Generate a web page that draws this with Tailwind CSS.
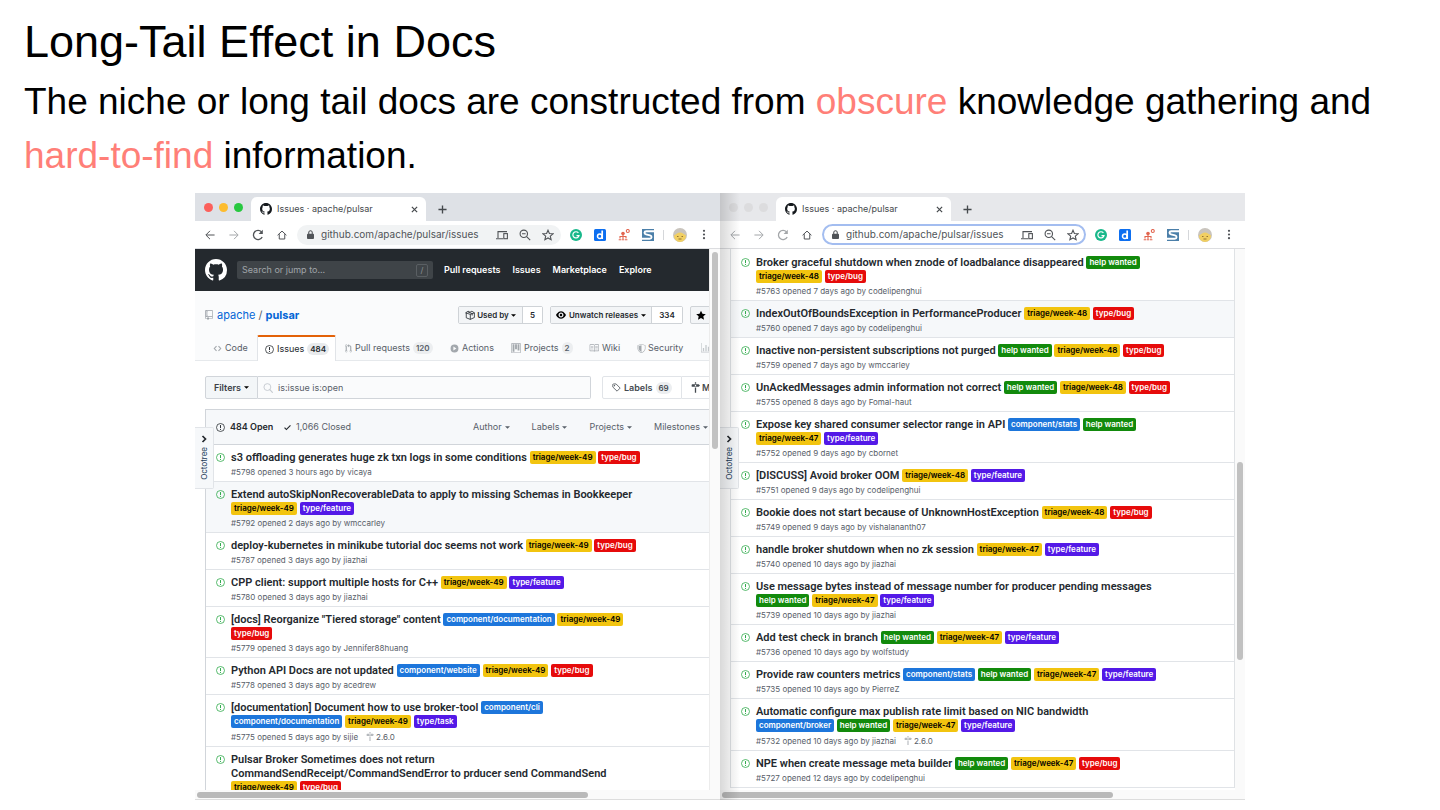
<!DOCTYPE html>
<html lang="en">
<head>
<meta charset="utf-8">
<title>Long-Tail Effect in Docs</title>
<script src="https://cdn.jsdelivr.net/npm/@tailwindcss/browser@4"></script>
</head>
<body class="bg-white text-black font-['Liberation_Sans',sans-serif]">
<svg class="hidden" xmlns="http://www.w3.org/2000/svg">
  <symbol id="mark" viewBox="0 0 16 16"><path d="M8 0C3.58 0 0 3.58 0 8c0 3.54 2.29 6.53 5.47 7.59.4.07.55-.17.55-.38 0-.19-.01-.82-.01-1.49-2.01.37-2.53-.49-2.69-.94-.09-.23-.48-.94-.82-1.13-.28-.15-.68-.52-.01-.53.63-.01 1.08.58 1.23.82.72 1.21 1.87.87 2.33.66.07-.52.28-.87.51-1.07-1.78-.2-3.64-.89-3.64-3.95 0-.87.31-1.59.82-2.15-.08-.2-.36-1.02.08-2.12 0 0 .67-.21 2.2.82.64-.18 1.32-.27 2-.27.68 0 1.36.09 2 .27 1.53-1.04 2.2-.82 2.2-.82.44 1.1.16 1.92.08 2.12.51.56.82 1.27.82 2.15 0 3.07-1.87 3.75-3.65 3.95.29.25.54.73.54 1.48 0 1.07-.01 1.93-.01 2.2 0 .21.15.46.55.38A8.013 8.013 0 0016 8c0-4.42-3.58-8-8-8z"/></symbol>
  <symbol id="issue" viewBox="0 0 14 14"><circle cx="7" cy="7" r="6.2" fill="none" stroke="currentColor" stroke-width="1.2"/><path fill="none" stroke="currentColor" stroke-width="1.5" d="M7 3.2v4.6M7 9.200v1.600"/></symbol>
  <symbol id="repo" viewBox="0 0 12 16"><path d="M4 9H3V8h1v1zm0-3H3v1h1V6zm0-2H3v1h1V4zm0-2H3v1h1V2zm8-1v12c0 .55-.45 1-1 1H6v2l-1.5-1.5L3 16v-2H1c-.55 0-1-.45-1-1V1c0-.55.45-1 1-1h10c.55 0 1 .45 1 1zm-1 10H1v2h2v-1h3v1h5v-2zm0-10H2v9h9V1z"/></symbol>
  <symbol id="code" viewBox="0 0 14 16"><path d="M9.5 3L8 4.5 11.5 8 8 11.5 9.5 13 14 8 9.5 3zm-5 0L0 8l4.5 5L6 11.5 2.5 8 6 4.5 4.5 3z"/></symbol>
  <symbol id="pr" viewBox="0 0 12 16"><path d="M11 11.28V5c-.03-.78-.34-1.47-.94-2.06C9.46 2.35 8.78 2.03 8 2H7V0L4 3l3 3V4h1c.27.02.48.11.69.31.21.2.3.42.31.69v6.28A1.993 1.993 0 0010 15a1.993 1.993 0 001-3.72zm-1 2.92c-.66 0-1.2-.55-1.2-1.2 0-.65.55-1.2 1.2-1.2.65 0 1.2.55 1.2 1.2 0 .65-.55 1.2-1.2 1.2zM4 3c0-1.11-.89-2-2-2a1.993 1.993 0 00-1 3.72v6.56A1.993 1.993 0 002 15a1.993 1.993 0 001-3.72V4.720c.59-.34 1-.98 1-1.72zm-.8 10c0 .66-.55 1.2-1.2 1.2-.65 0-1.2-.55-1.2-1.2 0-.65.55-1.2 1.2-1.2.65 0 1.2.55 1.2 1.2zM2 4.200C1.340 4.200.8 3.650.8 3c0-.65.55-1.2 1.200-1.200.65 0 1.200.55 1.200 1.200 0 .65-.55 1.200-1.200 1.200z"/></symbol>
  <symbol id="play" viewBox="0 0 14 16"><path fill-rule="evenodd" d="M14 8A7 7 0 110 8a7 7 0 0114 0zM5 4.6v6.8L10.4 8 5 4.6z"/></symbol>
  <symbol id="project" viewBox="0 0 15 16"><path fill-rule="evenodd" d="M10 12h3V2h-3v10zm-4-2h3V2H6v8zm-4 4h3V2H2v12zm-1 1h13V1H1v14zM14 0H1a1 1 0 00-1 1v14a1 1 0 001 1h13a1 1 0 001-1V1a1 1 0 00-1-1z"/></symbol>
  <symbol id="book" viewBox="0 0 16 16"><path fill-rule="evenodd" d="M3 5h4v1H3V5zm0 3h4V7H3v1zm0 2h4V9H3v1zm11-5h-4v1h4V5zm0 2h-4v1h4V7zm0 2h-4v1h4V9zm2-6v9c0 .55-.45 1-1 1H9.500l-1 1-1-1H2c-.55 0-1-.45-1-1V3c0-.55.45-1 1-1h5.500l1 1 1-1H15c.55 0 1 .45 1 1zm-8 .5L7.500 3H2v9h6V3.500zm7-.5H9.500l-.5.5V12h6V3z"/></symbol>
  <symbol id="shield" viewBox="0 0 14 16"><path fill-rule="evenodd" d="M0 2l7-2 7 2v6.020C14 12.690 8.690 16 7 16c-1.690 0-7-3.310-7-7.980V2zm1 .75L7 1l6 1.750v5.268C13 12.104 8.449 15 7 15c-1.449 0-6-2.896-6-6.982V2.750zm1 .75L7 2v12c-1.207 0-5-2.482-5-5.985V3.500z"/></symbol>
  <symbol id="graph" viewBox="0 0 16 16"><path d="M16 14v1H0V0h1v14h15zM5 13H3V8h2v5zm4 0H7V3h2v10zm4 0h-2V6h2v7z"/></symbol>
  <symbol id="package" viewBox="0 0 16 16"><path fill="none" stroke="currentColor" stroke-width="1.300" stroke-linejoin="round" d="M1 4.500L5 2l3 1.500L11 2l4 2.500V12l-6.500 3L2 12.500V4.500M1 4.500L8.500 7 15 4.500M8.500 7v8M4.500 3l7 2.800v3"/></symbol>
  <symbol id="eye" viewBox="0 0 16 16"><path fill-rule="evenodd" d="M8.060 2C3 2 0 8 0 8s3 6 8.060 6C13 14 16 8 16 8s-3-6-7.940-6zM8 12c-2.200 0-4-1.780-4-4 0-2.200 1.800-4 4-4 2.220 0 4 1.800 4 4 0 2.220-1.780 4-4 4zm2-4c0 1.110-.89 2-2 2-1.110 0-2-.89-2-2 0-1.110.89-2 2-2 1.110 0 2 .89 2 2z"/></symbol>
  <symbol id="star" viewBox="0 0 14 16"><path d="M14 6l-4.900-.64L7 1 4.900 5.360 0 6l3.600 3.260L2.670 14 7 11.670 11.330 14l-.93-4.740L14 6z"/></symbol>
  <symbol id="search" viewBox="0 0 16 16"><circle cx="7" cy="6.500" r="5.500" fill="none" stroke="currentColor" stroke-width="1.500"/><path stroke="currentColor" stroke-width="1.800" stroke-linecap="round" d="M11 10.500l4 4.500"/></symbol>
  <symbol id="milestone" viewBox="0 0 14 16"><path fill-rule="evenodd" d="M8 2H6V0h2v2zm4 5H2c-.55 0-1-.45-1-1V4c0-.55.45-1 1-1h10l2 2-2 2zM8 4H6v2h2V4zM6 16h2V8H6v8z"/></symbol>
  <symbol id="tag" viewBox="0 0 16 16"><path fill="none" stroke="currentColor" stroke-width="1.400" stroke-linejoin="round" d="M1.500 2.500v4.800l7.500 7.200 5.500-5.500L7.300 1.700H2.300z"/><circle cx="4.500" cy="4.700" r="1.100"/></symbol>
  <symbol id="check" viewBox="0 0 12 16"><path d="M12 5l-8 8-4-4 1.500-1.500L4 10l6.500-6.500L12 5z"/></symbol>
  <symbol id="caret" viewBox="0 0 8 8"><path d="M0 2h8L4 6z"/></symbol>
  <symbol id="back" viewBox="0 0 12 12"><path fill="none" stroke="currentColor" stroke-width="1.200" d="M11.500 6H1.500M6 1L1 6l5 5"/></symbol>
  <symbol id="forward" viewBox="0 0 12 12"><path fill="none" stroke="currentColor" stroke-width="1.200" d="M.5 6h10M6 1l5 5-5 5"/></symbol>
  <symbol id="reload" viewBox="0 0 12 12"><path fill="none" stroke="currentColor" stroke-width="1.300" d="M10.200 8A4.600 4.600 0 119.500 2.900"/><path d="M10.800.8v4.200H6.600z"/></symbol>
  <symbol id="home" viewBox="0 0 12 12"><path fill="none" stroke="currentColor" stroke-width="1.200" d="M.7 6.300L6 1.300l5.300 5M2.700 5v5.800h6.600V5"/></symbol>
  <symbol id="lock" viewBox="0 0 8 10"><rect y="4" width="8" height="6" rx="1"/><path fill="none" stroke="currentColor" stroke-width="1.200" d="M2 4.500V2.800a2 2 0 014 0v1.700"/></symbol>
  <symbol id="devices" viewBox="0 0 12 12"><path fill="none" stroke="currentColor" stroke-width="1.100" d="M11 2.600H2v6.500M0 9.700h7"/><rect x="7.800" y="4.600" width="3.600" height="5.100" fill="none" stroke="currentColor" stroke-width="1.100"/></symbol>
  <symbol id="zoomout" viewBox="0 0 12 12"><path fill="none" stroke="currentColor" stroke-width="1.100" d="M7.600 7.600l3.600 3.600M3 4.800h3.600"/><circle cx="4.800" cy="4.800" r="3.700" fill="none" stroke="currentColor" stroke-width="1.100"/></symbol>
  <symbol id="bookmark" viewBox="0 0 12 12"><path fill="none" stroke="currentColor" stroke-width="1.100" d="M6 1.200l1.400 3.300 3.600.3-2.700 2.400.8 3.500L6 8.900l-3.100 1.800.8-3.500L1 4.800l3.600-.3z"/></symbol>
  <symbol id="grammar" viewBox="0 0 12 12"><circle cx="6" cy="6" r="6" fill="#19b88b"/><path fill="none" stroke="#fff" stroke-width="1.200" d="M8.400 3.900A3.100 3.100 0 109 6.600H6.500"/></symbol>
  <symbol id="docs" viewBox="0 0 12 12"><rect width="12" height="12" rx="1.500" fill="#0d6ff0"/><path fill="none" stroke="#fff" stroke-width="1.700" d="M8.200 1.500v8.500"/><circle cx="5.800" cy="7.200" r="2.300" fill="none" stroke="#fff" stroke-width="1.500"/></symbol>
  <symbol id="tree" viewBox="0 0 12 12"><g fill="none" stroke="#e2654f" stroke-width="1.100"><circle cx="9.800" cy="2" r="1.500"/><path d="M5 6v4M2 9.500V7.500h6v2M.7 10.800h2.600M3.900 10.800h2.200M6.800 10.800h2.600"/></g><circle cx="5" cy="4.500" r="1.800" fill="#e2654f"/></symbol>
  <symbol id="swift" viewBox="0 0 12 12"><rect width="12" height="12" fill="#4b7fa9"/><path fill="none" stroke="#fff" stroke-width="1.900" d="M12 2.300H4.300C2 2.300 1.900 4.800 4 5.300l4 1C10.200 6.900 10 9.700 7.700 9.700H0"/></symbol>
  <symbol id="avatar" viewBox="0 0 14 14"><circle cx="7" cy="7" r="7" fill="#c9c4bd"/><path fill="#f1cf62" d="M1 7.500C3 6 5 4.500 7 4.500s4 1.500 6 3A6.200 6.200 0 017 14a6.200 6.200 0 01-6-6.500z"/><path stroke="#8a6a2a" fill="none" stroke-width=".9" d="M4 8.500h1.500M8.500 8.500H10M5.500 11h3"/></symbol>
  <symbol id="more" viewBox="0 0 4 12"><circle cx="2" cy="2" r="1.200"/><circle cx="2" cy="6" r="1.200"/><circle cx="2" cy="10" r="1.200"/></symbol>
  <symbol id="close" viewBox="0 0 8 8"><path stroke="currentColor" stroke-width="1.400" d="M1 1l6 6M7 1L1 7"/></symbol>
  <symbol id="plus" viewBox="0 0 10 10"><path stroke="currentColor" stroke-width="1.500" d="M5 .5v9M.5 5h9"/></symbol>
  <symbol id="chevron" viewBox="0 0 8 8"><path fill="none" stroke="currentColor" stroke-width="1.700" d="M2.500 1l3 3-3 3"/></symbol>
</svg>

<div class="flex h-screen flex-col pb-[10px]">
  <header class="px-6 pt-[15px] pb-[10px]">
    <h1 class="text-[45px] leading-[54px] mb-[6px]">Long-Tail Effect in Docs</h1>
    <p class="text-[37px] leading-[54px]">The niche or long tail docs are constructed from <span class="text-[#ff7f78]">obscure</span> knowledge gathering and <br><span class="text-[#ff7f78]">hard-to-find</span> information.</p>
  </header>

  <main class="grid min-h-0 flex-1 grid-cols-2 px-[195px] font-[Inter,sans-serif] text-[9px] text-[#24292e]">

    <!-- Left browser window -->
    <section class="z-10 flex min-h-0 min-w-0 flex-col overflow-hidden bg-white" aria-label="Issues window">
      <div data-chrome="active"></div>
      <div class="flex min-h-0 flex-1">
        <div class="relative min-w-0 flex-1 overflow-hidden whitespace-nowrap">
          <nav class="flex h-[42px] items-center bg-[#24292e] pl-[10px] font-semibold text-white">
            <svg class="size-[22px] shrink-0 fill-current" aria-hidden="true"><use href="#mark"/></svg>
            <label class="mr-[11px] ml-[10px] flex h-[18px] w-[196px] shrink-0 items-center rounded-xs bg-[#3f4448] px-[5px]">
              <input class="min-w-0 flex-1 font-normal text-white outline-none placeholder:text-[#a0a4a8]" type="text" aria-label="Search" placeholder="Search or jump to...">
              <span class="flex h-[13px] w-[12px] items-center justify-center rounded-xs border border-[#5a5f63] font-normal text-[8px] text-[#8d9296]">/</span>
            </label>
            <div class="flex gap-[12px]"><a href="#">Pull requests</a><a href="#">Issues</a><a href="#">Marketplace</a><a href="#">Explore</a></div>
          </nav>
          <div class="h-[70px] border-b border-[#e6e9ec] bg-[#fafbfc]">
            <div class="flex h-[44px] items-center pt-[4px] pl-[10px]">
              <svg class="h-[10px] w-[8px] shrink-0 fill-[#9aa0a6]" aria-hidden="true"><use href="#repo"/></svg>
              <h2 class="ml-[4px] w-[241px] shrink-0 text-[11px] text-[#0366d6]"><a href="#">apache</a> <span class="text-[#586069]">/</span> <a href="#" class="font-bold">pulsar</a></h2>
              <div class="flex h-[18px] shrink-0 gap-[7px] text-[8px] font-semibold">
                <div class="flex w-[85px] rounded-xs border border-[#cfd3d7]"><button class="flex flex-1 items-center justify-center gap-[2px] bg-[#f3f5f7]"><svg class="size-[10px]"><use href="#package"/></svg>Used by <svg class="size-[5px]"><use href="#caret"/></svg></button><a href="#" class="flex w-[20px] items-center justify-center border-l border-[#cfd3d7] bg-white">5</a></div>
                <div class="flex w-[133px] rounded-xs border border-[#cfd3d7]"><button class="flex flex-1 items-center justify-center gap-[3px] bg-[#f3f5f7]"><svg class="size-[10px]"><use href="#eye"/></svg>Unwatch releases <svg class="size-[5px]"><use href="#caret"/></svg></button><a href="#" class="flex w-[31px] items-center justify-center border-l border-[#cfd3d7] bg-white">334</a></div>
                <button class="flex w-[60px] items-center rounded-xs border border-[#cfd3d7] bg-[#f3f5f7] px-[5px]" aria-label="Star"><svg class="h-[11px] w-[10px] shrink-0"><use href="#star"/></svg></button>
              </div>
            </div>
            <div class="flex h-[26px] pl-[10px] text-[#586069]">
              <a href="#" class="flex w-[52px] shrink-0 items-center gap-[3px] pl-[8px]"><svg class="size-[9px] fill-[#a3a8ad]"><use href="#code"/></svg>Code</a>
              <a href="#" class="flex w-[79px] shrink-0 items-center gap-[3px] rounded-t-xs border-x border-t-2 border-x-[#e1e4e8] border-t-[#e36209] bg-white pl-[7px] text-[#24292e]"><svg class="size-[9px]"><use href="#issue"/></svg>Issues<span class="rounded-full bg-[#e8eaec] px-[3px] text-[8px] font-semibold">484</span></a>
              <a href="#" class="flex w-[106px] shrink-0 items-center gap-[2px] pl-[8px]"><svg class="size-[9px] fill-[#a3a8ad]"><use href="#pr"/></svg>Pull requests<span class="ml-px rounded-full bg-[#eceef0] px-[3px] text-[8px] font-semibold">120</span></a>
              <a href="#" class="flex w-[61px] shrink-0 items-center gap-[3px] pl-[8px]"><svg class="size-[9px] fill-[#a3a8ad]"><use href="#play"/></svg>Actions</a>
              <a href="#" class="flex w-[78px] shrink-0 items-center gap-[3px] pl-[8px]"><svg class="size-[10px] fill-[#a3a8ad]"><use href="#project"/></svg>Projects<span class="rounded-full bg-[#eceef0] px-[3px] text-[8px] font-semibold">2</span></a>
              <a href="#" class="flex w-[48px] shrink-0 items-center gap-[3px] pl-[8px]"><svg class="size-[10px] fill-[#a3a8ad]"><use href="#book"/></svg>Wiki</a>
              <a href="#" class="flex w-[64px] shrink-0 items-center gap-[2px] pl-[8px]"><svg class="size-[9px] fill-[#a3a8ad]"><use href="#shield"/></svg>Security</a>
              <a href="#" class="flex shrink-0 items-center pl-[8px]" aria-label="Insights"><svg class="size-[10px] fill-[#c3c7cb]"><use href="#graph"/></svg></a>
            </div>
          </div>
          <div class="flex h-[23px] mt-[15px] mb-[10px] pl-[10px]">
            <button class="flex w-[53px] shrink-0 items-center justify-center gap-[3px] rounded-l-xs border border-[#d1d5da] bg-[#f3f6f8] font-semibold text-[#3b4046]">Filters <svg class="size-[5px]"><use href="#caret"/></svg></button>
            <label class="flex w-[333px] shrink-0 items-center gap-[5px] rounded-r-xs border border-l-0 border-[#d1d5da] bg-[#fafbfc] pl-[5px]"><svg class="size-[10px] text-[#c6cbd1]"><use href="#search"/></svg><input class="min-w-0 flex-1 text-[#586069] outline-none" type="text" aria-label="Search all issues" value="is:issue is:open"></label>
            <a href="#" class="ml-[11px] flex w-[80px] shrink-0 items-center gap-[3px] rounded-l-xs border border-[#e1e4e8] pl-[9px] font-semibold text-[#444a50]"><svg class="size-[9px] fill-current"><use href="#tag"/></svg>Labels<span class="rounded-full bg-[#eceef0] px-[3px] text-[8px]">69</span></a>
            <a href="#" class="flex w-[110px] shrink-0 items-center gap-[2px] border-y border-[#e1e4e8] pl-[9px] font-semibold text-[#444a50]"><svg class="h-[11px] w-[9px] fill-current"><use href="#milestone"/></svg>M</a>
          </div>
          <div class="ml-[10px] border-t border-l border-[#d1d5da]">
            <div class="flex h-[35px] items-center border-b border-[#d1d5da] bg-[#f6f8fa] pl-[10px] text-[#586069]">
              <a href="#" class="flex w-[67px] shrink-0 items-center gap-[5px] font-semibold text-[#24292e]"><svg class="size-[9px]"><use href="#issue"/></svg>484 Open</a>
              <a href="#" class="flex w-[190px] shrink-0 items-center gap-[4px]"><svg class="size-[9px] fill-[#24292e]"><use href="#check"/></svg>1,066 Closed</a>
              <div class="flex shrink-0 gap-[22px]">
                <button class="flex items-center gap-[3px]">Author <svg class="size-[5px] fill-current"><use href="#caret"/></svg></button>
                <button class="flex items-center gap-[3px]">Labels <svg class="size-[5px] fill-current"><use href="#caret"/></svg></button>
                <button class="flex items-center gap-[3px]">Projects <svg class="size-[5px] fill-current"><use href="#caret"/></svg></button>
                <button class="flex items-center gap-[3px]">Milestones <svg class="size-[5px] fill-current"><use href="#caret"/></svg></button>
              </div>
            </div>
            <ul data-list="left"></ul>
          </div>
          <button class="absolute top-[178px] left-0 flex h-[62px] w-[19px] flex-col items-center gap-[4px] rounded-r-xs border border-l-0 border-[#e1e4e8] bg-[#f6f8fa] pt-[7px]"><svg class="size-[8px]"><use href="#chevron"/></svg><span class="rotate-180 [writing-mode:vertical-rl] text-[8px] text-[#1b3a57]">Octotree</span></button>
        </div>
        <div class="w-[11px] shrink-0 border-l border-[#ececec] bg-[#fafafa] px-[2px] pt-[3px]"><div class="h-[197px] w-[6px] rounded-full bg-[#c1c1c1]"></div></div>
      </div>
      <div class="h-[10px] shrink-0 border-b border-[#dddddd] bg-[#fafafa] px-[2px] pt-[2px]"><div class="h-[6px] w-3/4 rounded-full bg-[#b9b9b9]"></div></div>
    </section>

    <!-- Right browser window, behind the left one -->
    <section class="relative flex min-h-0 min-w-0 flex-col overflow-hidden bg-white" aria-label="Issues window, scrolled">
      <div data-chrome="idle"></div>
      <div class="flex min-h-0 flex-1">
        <div class="relative min-w-0 flex-1 overflow-hidden whitespace-nowrap pl-[10px]">
          <ul data-list="right" class="border-x border-[#dfe2e5] pt-px"></ul>
          <button class="absolute top-[178px] left-0 flex h-[62px] w-[19px] flex-col items-center gap-[4px] rounded-r-xs border border-l-0 border-[#e1e4e8] bg-[#f6f8fa] pt-[7px]"><svg class="size-[8px]"><use href="#chevron"/></svg><span class="rotate-180 [writing-mode:vertical-rl] text-[8px] text-[#1b3a57]">Octotree</span></button>
        </div>
        <div class="w-[10px] shrink-0 bg-[#fafafa] px-[2px] pt-[213px]"><div class="h-[198px] w-[6px] rounded-full bg-[#c1c1c1]"></div></div>
      </div>
      <div class="h-[10px] shrink-0 border-b border-[#dddddd] bg-[#fafafa] px-[2px] pt-[2px]"><div class="h-[6px] w-3/4 rounded-full bg-[#b9b9b9]"></div></div>
      <div class="pointer-events-none absolute inset-y-0 left-0 w-[20px] bg-linear-to-r from-black/15 to-transparent"></div>
    </section>
  </main>
</div>

<script>
const icon = (id, cls) => `<svg class="${cls}" aria-hidden="true"><use href="#${id}"/></svg>`;

// Browser tab strip and toolbar; the idle window has grey lights and a focused address bar.
const themes = {
  active: { strip: 'flex h-[28px] shrink-0 items-end bg-[#dee1e6] pl-[9px]', lights: ['bg-[#fc605b]', 'bg-[#fdbc2e]', 'bg-[#28c840]'], nav: 'text-[#505357]', pill: 'mx-[9px] flex h-[20px] min-w-0 flex-1 items-center rounded-full bg-[#f1f3f4] pr-[7px] pl-[10px] text-[#505357]' },
  idle: { strip: 'flex h-[28px] shrink-0 items-end bg-[#e7e8eb] pl-[9px]', lights: ['bg-[#dcdcde]', 'bg-[#dcdcde]', 'bg-[#dcdcde]'], nav: 'text-[#a3a6a9]', pill: 'mx-[9px] flex h-[21px] min-w-0 flex-1 items-center rounded-full bg-white pr-[7px] pl-[10px] text-[#505357] ring-2 ring-inset ring-[#a3bdf0]' }
};
document.querySelectorAll('[data-chrome]').forEach(el => {
  const t = themes[el.dataset.chrome];
  el.innerHTML = `
  <div class="${t.strip}">
    <div class="flex h-[28px] w-[47px] shrink-0 items-center gap-[6px]">${t.lights.map(c => `<span class="size-[9px] rounded-full ${c}"></span>`).join('')}</div>
    <div class="flex h-[24px] w-[175px] items-center rounded-t-md bg-white pr-[8px] pl-[9px] text-[#45494d]">${icon('mark', 'size-[12px] fill-[#15191d]')}<span class="ml-[5px] flex-1">Issues · apache/pulsar</span><button aria-label="Close tab">${icon('close', 'size-[7px]')}</button></div>
    <button class="mb-[7px] ml-[12px] text-[#45494d]" aria-label="New tab">${icon('plus', 'size-[9px]')}</button>
  </div>
  <div class="flex h-[28px] items-center border-b border-[#dcdde0] bg-white pr-[14px] pl-[9px] text-[#505357]">
    <div class="flex gap-[12px] ${t.nav}">
      <button aria-label="Back">${icon('back', 'size-[12px] p-px')}</button><button class="text-[#a3a6a9]" aria-label="Forward">${icon('forward', 'size-[12px] p-px')}</button><button aria-label="Reload">${icon('reload', 'size-[12px] fill-current')}</button><button class="text-[#505357]" aria-label="Home">${icon('home', 'size-[12px] p-px')}</button>
    </div>
    <div class="${t.pill}">
      ${icon('lock', 'h-[9px] w-[7px] shrink-0 fill-current')}
      <input class="ml-[7px] min-w-0 flex-1 text-[10px] text-[#505458] outline-none" type="text" aria-label="Address" value="github.com/apache/pulsar/issues">
      <div class="flex gap-[11px]">${icon('devices', 'size-[12px]')}${icon('zoomout', 'size-[12px]')}${icon('bookmark', 'size-[12px]')}</div>
    </div>
    <div class="flex items-center gap-[12px]">${icon('grammar', 'size-[12px]')}${icon('docs', 'size-[12px]')}${icon('tree', 'size-[12px]')}${icon('swift', 'size-[12px]')}</div>
    <span class="mx-[9px] h-[10px] w-px bg-[#d5d7da]"></span>
    ${icon('avatar', 'size-[14px]')}
    <button class="ml-[15px]" aria-label="Menu">${icon('more', 'h-[11px] w-[4px] fill-current')}</button>
  </div>`;
});

const tones = { t: 'bg-[#f2c40f] text-black', h: 'bg-[#128a0c] text-white', c: 'bg-[#1d76db] text-white', b: 'bg-[#e60b0b] text-white', f: 'bg-[#5319e7] text-white' };
const W49 = ['t', 'triage/week-49'], W48 = ['t', 'triage/week-48'], W47 = ['t', 'triage/week-47'];
const BUG = ['b', 'type/bug'], FEAT = ['f', 'type/feature'], HELP = ['h', 'help wanted'], BR = null;
const left = [
  ['s3 offloading generates huge zk txn logs in some conditions', [W49, BUG], '#5798 opened 3 hours ago by vicaya'],
  ['Extend autoSkipNonRecoverableData to apply to missing Schemas in Bookkeeper', [BR, W49, FEAT], '#5792 opened 2 days ago by wmccarley', 1],
  ['deploy-kubernetes in minikube tutorial doc seems not work', [W49, BUG], '#5787 opened 3 days ago by jiazhai'],
  ['CPP client: support multiple hosts for C++', [W49, FEAT], '#5780 opened 3 days ago by jiazhai'],
  ['[docs] Reorganize "Tiered storage" content', [['c', 'component/documentation'], W49, BR, BUG], '#5779 opened 3 days ago by Jennifer88huang'],
  ['Python API Docs are not updated', [['c', 'component/website'], W49, BUG], '#5778 opened 3 days ago by acedrew'],
  ['[documentation] Document how to use broker-tool', [['c', 'component/cli'], BR, ['c', 'component/documentation'], W49, ['f', 'type/task']], '#5775 opened 5 days ago by sijie', 0, '2.6.0'],
  ['Pulsar Broker Sometimes does not return<br>CommandSendReceipt/CommandSendError to prducer send CommandSend', [BR, W49, BUG], '']
];
const right = [
  ['Broker graceful shutdown when znode of loadbalance disappeared', [HELP, BR, W48, BUG], '#5763 opened 7 days ago by codelipenghui'],
  ['IndexOutOfBoundsException in PerformanceProducer', [W48, BUG], '#5760 opened 7 days ago by codelipenghui', 1],
  ['Inactive non-persistent subscriptions not purged', [HELP, W48, BUG], '#5759 opened 7 days ago by wmccarley'],
  ['UnAckedMessages admin information not correct', [HELP, W48, BUG], '#5755 opened 8 days ago by Fomal-haut'],
  ['Expose key shared consumer selector range in API', [['c', 'component/stats'], HELP, BR, W47, FEAT], '#5752 opened 9 days ago by cbornet'],
  ['[DISCUSS] Avoid broker OOM', [W48, FEAT], '#5751 opened 9 days ago by codelipenghui'],
  ['Bookie does not start because of UnknownHostException', [W48, BUG], '#5749 opened 9 days ago by vishalananth07'],
  ['handle broker shutdown when no zk session', [W47, FEAT], '#5740 opened 10 days ago by jiazhai'],
  ['Use message bytes instead of message number for producer pending messages', [BR, HELP, W47, FEAT], '#5739 opened 10 days ago by jiazhai'],
  ['Add test check in branch', [HELP, W47, FEAT], '#5736 opened 10 days ago by wolfstudy'],
  ['Provide raw counters metrics', [['c', 'component/stats'], HELP, W47, FEAT], '#5735 opened 10 days ago by PierreZ'],
  ['Automatic configure max publish rate limit based on NIC bandwidth', [BR, ['c', 'component/broker'], HELP, W47, FEAT], '#5732 opened 10 days ago by jiazhai', 0, '2.6.0'],
  ['NPE when create message meta builder', [HELP, W47, BUG], '#5727 opened 12 days ago by codelipenghui']
];
const row = ([title, labels, meta, shaded, milestone]) => `
  <li class="flex gap-[6px] border-b border-[#e1e4e8] pt-[6px] pb-[2px] pl-[10px] ${shaded ? 'bg-[#f6f8fa]' : 'bg-white'}">
    ${icon('issue', 'mt-[2px] size-[9px] shrink-0 text-[#28a745]')}
    <div>
      <div class="font-[Roboto,sans-serif] text-[11px] leading-[14px] font-semibold"><a href="#">${title}</a>${labels.map(l => l ? ` <a href="#" class="inline-block h-[13px] rounded-[2px] px-[3px] align-top font-[Inter,sans-serif] text-[8px] leading-[13px] font-semibold ${tones[l[0]]}">${l[1]}</a>` : '<br>').join('')}</div>
      <div class="flex items-center gap-[8px] text-[8px] text-[#586069] ${milestone ? 'h-[15px]' : 'h-[14px]'}">${meta}${milestone ? `<a href="#" class="flex items-center gap-[2px]">${icon('milestone', 'h-[9px] w-[8px] fill-[#b5b9bd]')}${milestone}</a>` : ''}</div>
    </div>
  </li>`;
document.querySelector('[data-list=left]').innerHTML = left.map(row).join('');
document.querySelector('[data-list=right]').innerHTML = right.map(row).join('');
</script>
</body>
</html>
